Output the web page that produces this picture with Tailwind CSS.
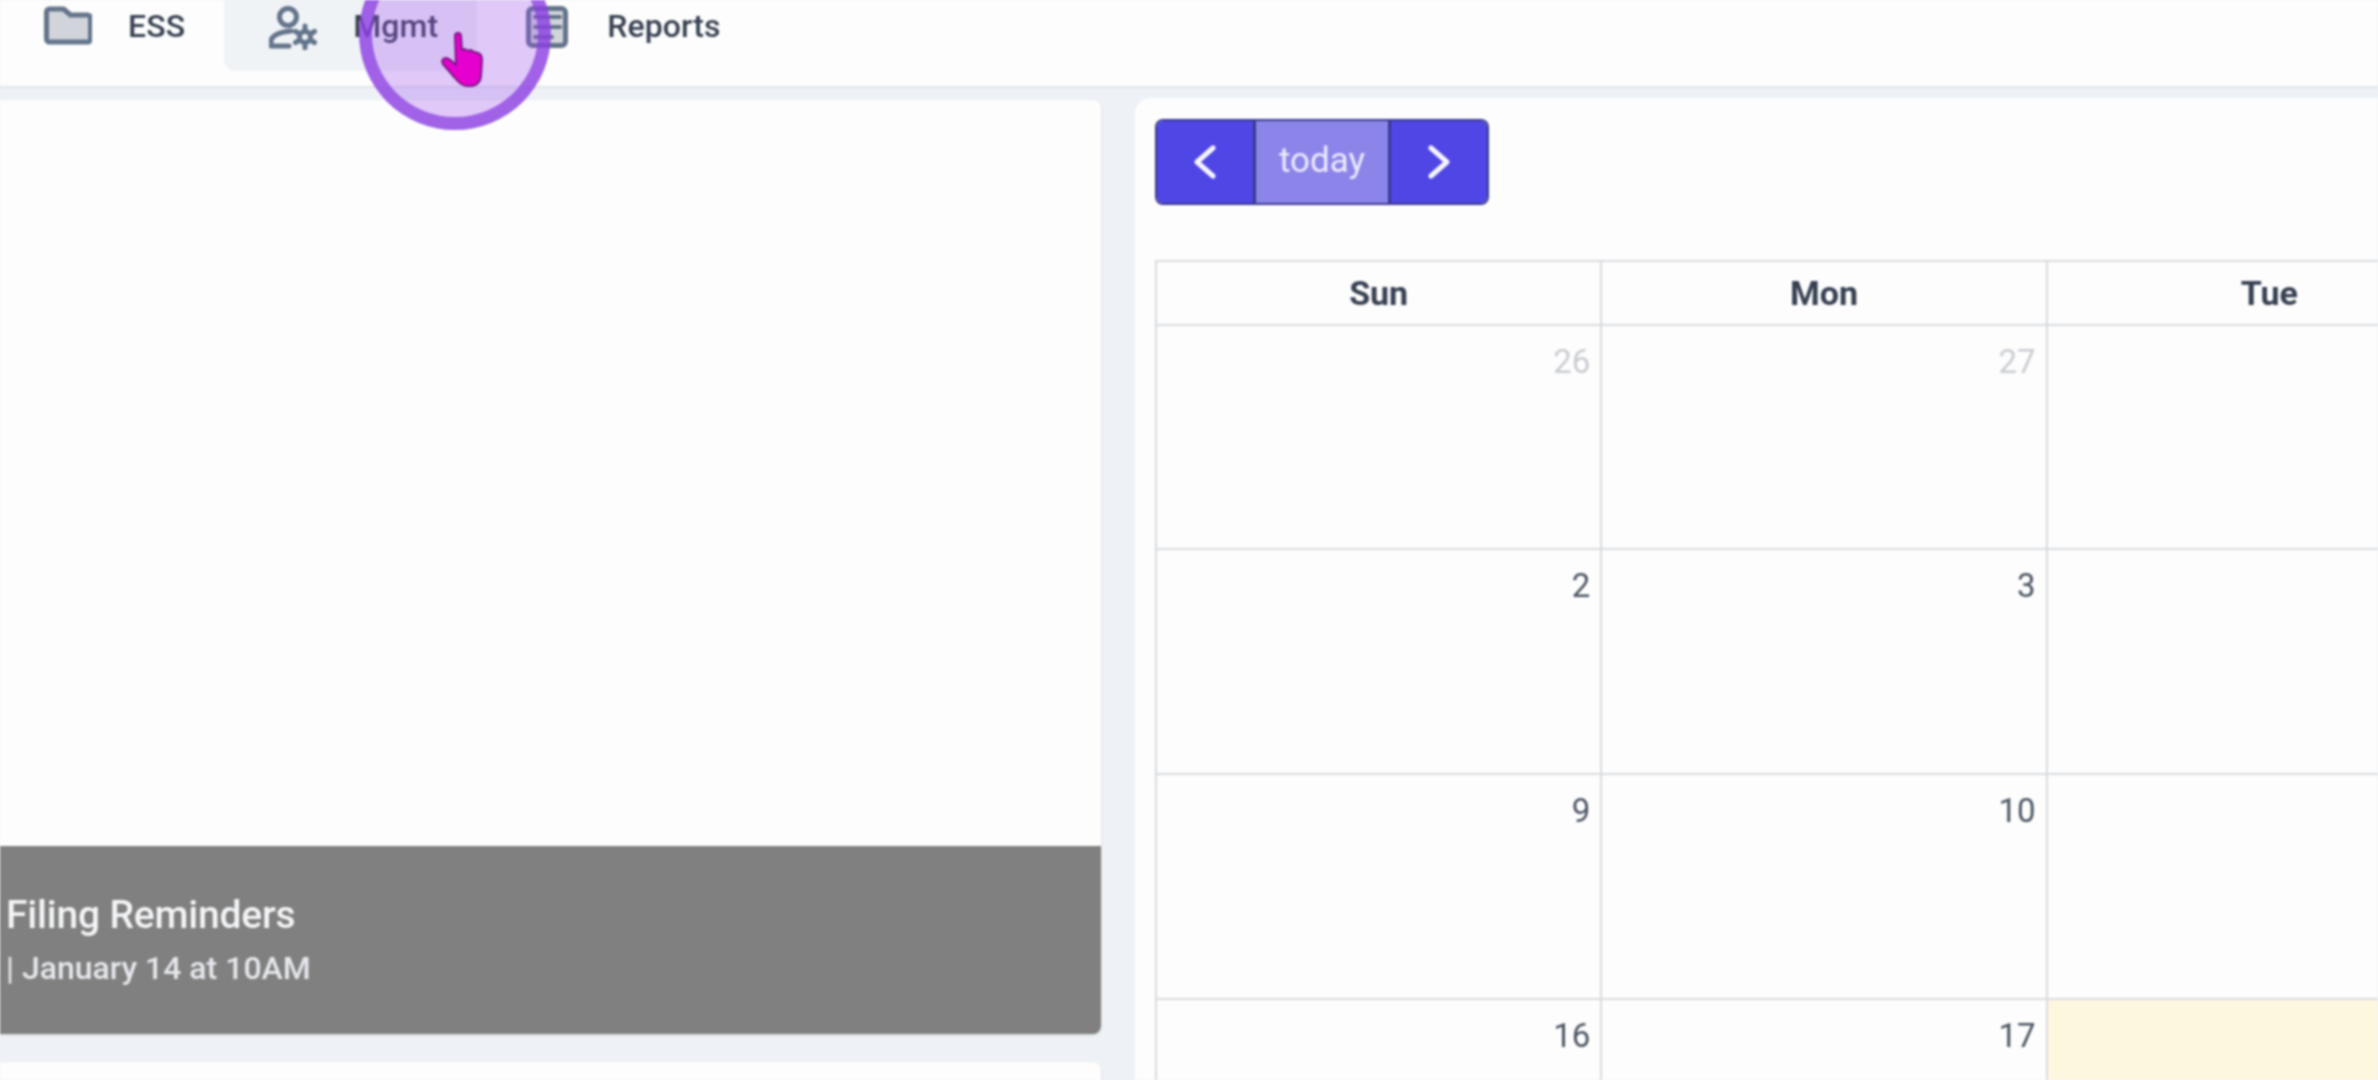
<!DOCTYPE html>
<html lang="en">
<head>
<meta charset="utf-8">
<script src="https://cdn.jsdelivr.net/npm/@tailwindcss/browser@4"></script>
<title>Calendar</title>
</head>
<body class="m-0 overflow-hidden bg-[#eef2f6]">
<div class="relative h-[1080px] w-[2378px] overflow-hidden bg-[#eef2f6] font-['Roboto',sans-serif] text-[#374151] blur-[1px]">
  <header class="flex h-[88px] items-start border-b-2 border-[#e0e6ec] bg-[#fdfdfd]">
    <nav class="-mt-[19px] flex h-[90px] items-stretch text-[32px] font-medium tracking-[0.1px]">
      <a class="-ml-px flex items-center gap-[36px] rounded-b-lg pl-[45px] pr-[39px]">
        <svg class="h-[48px] w-[48px] shrink-0" viewBox="0 0 48 48" fill="#d1d5db" stroke="#64748b" stroke-width="5" stroke-linejoin="round"><path d="M2.500 10a3 3 0 0 1 3-3h14l7 6h17a3 3 0 0 1 3 3v21a3 3 0 0 1-3 3H5.500a3 3 0 0 1-3-3z"/></svg>
        <span>ESS</span>
      </a>
      <a class="flex items-center gap-[36px] rounded-b-xl bg-[#eff3f6] pl-[45px] pr-[39px]">
        <svg class="h-[48px] w-[48px] shrink-0" viewBox="0 0 48 48" fill="none" stroke="#64748b" stroke-width="5" stroke-linecap="round" stroke-linejoin="round"><circle cx="19" cy="15" r="8.500"/><path d="M22 29C12 30 3 33 2 39v5h18"/><circle cx="36" cy="35" r="5.500"/><path d="M36 24v3M36 43v3M26.500 29.500l2.500 1.500M43 39l2.500 1.500M26.500 40.500l2.500-1.500M43 31l2.500-1.500"/></svg>
        <span>Mgmt</span>
      </a>
      <a class="flex items-center gap-[36px] pl-[46px]">
        <svg class="h-[48px] w-[48px] shrink-0" viewBox="0 0 48 48" fill="#d1d5db" stroke="#64748b" stroke-width="5" stroke-linecap="round" stroke-linejoin="round"><rect x="5.500" y="6.500" width="37" height="37" rx="4"/><path d="M12 15h25M12 25h25M12 35h17" stroke-width="4"/></svg>
        <span>Reports</span>
      </a>
    </nav>
  </header>

  <main class="flex items-start pt-[12px]">
    <section class="w-[1101px] shrink-0">
      <div class="flex h-[934px] flex-col justify-end overflow-hidden rounded-r-lg bg-[#fdfdfd] shadow-sm">
        <div class="flex h-[188px] flex-col justify-center bg-[#808080] pb-[2px] pl-[6px] text-[#f3f4f6]">
          <p class="text-[39px] font-medium leading-[48px] tracking-[-0.2px]">Filing Reminders</p>
          <p class="mt-[9px] text-[32px] font-medium leading-[40px] text-[#e5e7eb]">| January 14 at 10AM</p>
        </div>
      </div>
      <div class="mt-[28px] h-[40px] rounded-tr-lg bg-[#fdfdfd] shadow-sm"></div>
    </section>

    <section class="-mt-[2px] ml-[34px] h-[1000px] flex-1 overflow-hidden rounded-tl-2xl bg-[#fdfdfd] pl-[20px] pt-[21px]">
      <div class="flex h-[86px] w-[334px] overflow-hidden rounded-lg border-2 border-[#3b3a8f] text-[35px] text-[#eceafc]">
        <button class="flex w-[99px] items-center justify-center border-r-[3px] border-[#3b3a8f] bg-[#4f46e5]" aria-label="Previous">
          <svg class="h-[34px] w-[24px]" viewBox="0 0 24 34" fill="none" stroke="#f5f5ff" stroke-width="5" stroke-linecap="round" stroke-linejoin="round"><path d="M20 3 4 17l16 14"/></svg>
        </button>
        <button class="flex w-[132px] items-center justify-center bg-[#8b85ea] pb-[2px]">today</button>
        <button class="flex flex-1 items-center justify-center border-l-[3px] border-[#3b3a8f] bg-[#4f46e5]" aria-label="Next">
          <svg class="h-[34px] w-[24px]" viewBox="0 0 24 34" fill="none" stroke="#f5f5ff" stroke-width="5" stroke-linecap="round" stroke-linejoin="round"><path d="M4 3l16 14L4 31"/></svg>
        </button>
      </div>

      <div class="mt-[55px] grid w-[1338px] grid-cols-3 grid-rows-[64px_224px_225px_225px_200px] border-l-2 border-t-2 border-[#d9dbde] text-right text-[33px] text-[#4b5563]">
        <div class="flex items-center justify-center border-b-2 border-r-2 border-[#d9dbde] text-[34px] font-bold text-[#374151]">Sun</div>
        <div class="flex items-center justify-center border-b-2 border-r-2 border-[#d9dbde] text-[34px] font-bold text-[#374151]">Mon</div>
        <div class="flex items-center justify-center border-b-2 border-r-2 border-[#d9dbde] text-[34px] font-bold text-[#374151]">Tue</div>

        <div class="border-b-2 border-r-2 border-[#d9dbde] pr-[10px] pt-[16px] leading-[40px] text-[#c9ccd1]">26</div>
        <div class="border-b-2 border-r-2 border-[#d9dbde] pr-[10px] pt-[16px] leading-[40px] text-[#c9ccd1]">27</div>
        <div class="border-b-2 border-r-2 border-[#d9dbde]"></div>

        <div class="border-b-2 border-r-2 border-[#d9dbde] pr-[10px] pt-[16px] leading-[40px]">2</div>
        <div class="border-b-2 border-r-2 border-[#d9dbde] pr-[10px] pt-[16px] leading-[40px]">3</div>
        <div class="border-b-2 border-r-2 border-[#d9dbde]"></div>

        <div class="border-b-2 border-r-2 border-[#d9dbde] pr-[10px] pt-[16px] leading-[40px]">9</div>
        <div class="border-b-2 border-r-2 border-[#d9dbde] pr-[10px] pt-[16px] leading-[40px]">10</div>
        <div class="border-b-2 border-r-2 border-[#d9dbde]"></div>

        <div class="border-r-2 border-[#d9dbde] pr-[10px] pt-[16px] leading-[40px]">16</div>
        <div class="border-r-2 border-[#d9dbde] pr-[10px] pt-[16px] leading-[40px]">17</div>
        <div class="bg-[#fdf7e0]"></div>
      </div>
    </section>
  </main>

  <div class="absolute left-[359px] top-[-62px] h-[192px] w-[192px] rounded-full border-[13px] border-[#8b3fe0]/75 bg-[#a050ee]/30"></div>
  <svg class="absolute left-[441px] top-[32px] h-[55px] w-[42px]" viewBox="0 0 42 55" fill="#e600cf" stroke="#7a1a85" stroke-width="2" stroke-linejoin="round"><path d="M14 4c0-4 6-4 6 0l1 14 3-1 3 2 3-1 3 2 4 1c3 1 4 3 4 7l-1 16c0 5-4 10-10 10h-4c-4 0-8-3-12-8L2 32c-2-3 0-6 3-6 3 0 7 4 10 7z"/></svg>
</div>
</body>
</html>
